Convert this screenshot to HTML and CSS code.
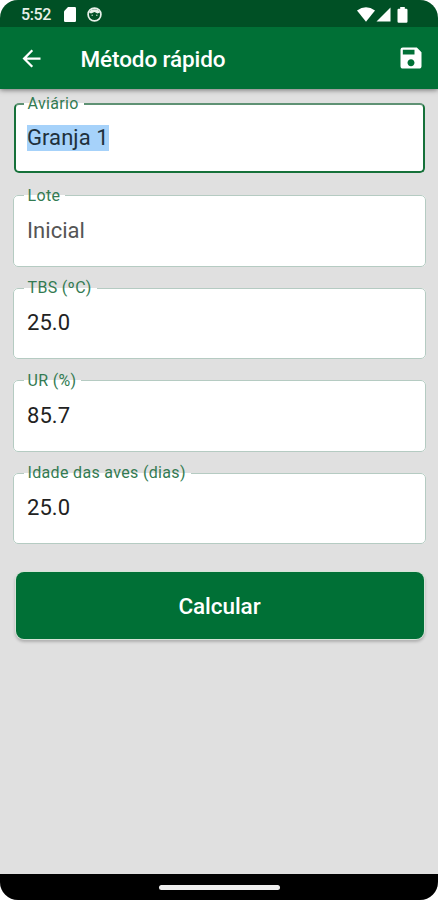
FILE: index.html
```html
<!DOCTYPE html>
<html lang="pt-BR">
<head>
<meta charset="utf-8">
<meta name="viewport" content="width=device-width">
<title>Método rápido</title>
<link rel="stylesheet" href="styles.css">
</head>
<body>
<div class="phone">
  <div class="status">
    <span class="time">5:52</span>
    <svg class="sd" width="12" height="15" viewBox="0 0 12 15"><path fill="#fff" d="M4 0h6.800Q12 0 12 1.200v12.600Q12 15 10.800 15H1.200Q0 15 0 13.800V4.200z"/></svg>
    <svg class="face" width="15" height="15" viewBox="0 0 15 15"><circle cx="7.500" cy="7.500" r="6.400" fill="none" stroke="#e8f0e9" stroke-width="1.700"/><path fill="#e8f0e9" d="M2 5.500C3.500 1 11.500 1 13 5.500L10.500 6.500 7.500 5 4 6.500z"/><circle cx="5.200" cy="8.200" r=".8" fill="#b8d0be"/><circle cx="9.800" cy="8.200" r=".8" fill="#b8d0be"/></svg>
    <span class="grow"></span>
    <svg class="wifi" width="18" height="15" viewBox="0 0 18 15"><path fill="#fff" d="M0 3.500Q9-3 18 3.500L9 14.800z"/></svg>
    <svg class="signal" width="15" height="15" viewBox="0 0 15 15"><path fill="#fff" d="M14.500.5v14H.5z"/></svg>
    <svg class="battery" width="11" height="16" viewBox="0 0 11 16"><path fill="#fff" d="M3.200 0h4.600v1.800h1.500q1.200 0 1.200 1.200v11.500q0 1.200-1.200 1.200H1.700Q.5 15.700.5 14.500V3q0-1.200 1.200-1.200h1.500z"/></svg>
  </div>
  <header class="appbar">
    <svg class="back" width="27" height="27" viewBox="0 0 24 24"><path fill="#fff" d="M20 11H7.830l5.590-5.590L12 4l-8 8 8 8 1.410-1.410L7.830 13H20v-2z"/></svg>
    <h1>Método rápido</h1>
    <svg class="save" width="28" height="28" viewBox="0 0 24 24"><path fill="#fff" d="M17 3H5a2 2 0 0 0-2 2v14c0 1.100.89 2 2 2h14c1.100 0 2-.9 2-2V7l-4-4zm-5 16c-1.660 0-3-1.340-3-3s1.340-3 3-3 3 1.340 3 3-1.340 3-3 3zm3-10H5V5h10v4z"/></svg>
  </header>
  <main>
    <fieldset class="field focused"><legend>Aviário</legend><span class="value"><mark>Granja 1</mark></span></fieldset>
    <fieldset class="field readonly"><legend>Lote</legend><span class="value">Inicial</span></fieldset>
    <fieldset class="field"><legend>TBS (ºC)</legend><span class="value">25.0</span></fieldset>
    <fieldset class="field"><legend>UR (%)</legend><span class="value">85.7</span></fieldset>
    <fieldset class="field"><legend>Idade das aves (dias)</legend><span class="value">25.0</span></fieldset>
    <button class="submit">Calcular</button>
  </main>
  <footer class="navbar"><span class="handle"></span></footer>
</div>
</body>
</html>
```
FILE: styles.css
```css
* { box-sizing: border-box; }
body { margin: 0; background: #fff; font-family: Roboto, sans-serif; }
.phone { width: 438px; height: 900px; display: flex; flex-direction: column; overflow: hidden; border-radius: 18px; background: #e0e0e0; }
.status { position: relative; z-index: 1; height: 27px; flex: none; display: flex; align-items: center; padding: 2px 30px 0 21px; background: #005025; color: #fff; }
.time { width: 43px; font-size: 16px; line-height: 20px; font-weight: 500; letter-spacing: -.35px; color: #e9f0e9; }
.face { margin-left: 11px; }
.grow { flex: 1; }
.signal { margin-left: 1px; }
.battery { margin-left: 6px; }
.appbar { height: 62px; flex: none; display: flex; align-items: center; padding: 0 13px 0 18px; background: #007036; color: #fff; box-shadow: 0 1px 5px rgba(0,0,0,.5); }
h1 { flex: 1; margin: 2px 0 0 35.500px; font-size: 22.500px; line-height: 28px; font-weight: 500; letter-spacing: -.1px; }
main { flex: 1; padding: 5px 12.500px 0; }
.field { height: 80px; min-width: 0; margin: 0 0 12.500px; padding: 0 0 0 10px; border: 1px solid #b5cbc2; border-radius: 5px; background: #fff; }
.field legend { height: 18px; padding: 0 5px 0 4px; font-size: 16px; line-height: 18px; letter-spacing: .33px; color: #337b52; }
.focused { height: 77.500px; margin: 1px 1px 14px; padding-left: 8px; border: 2px solid #16713a; border-top-color: #5f9274; }
.value { display: block; margin-top: 13px; padding-left: 3.500px; font-size: 22px; line-height: 26px; letter-spacing: .05px; color: #222; }
.focused .value { margin-top: 12px; }
.readonly .value { color: #555; }
mark { display: inline-block; height: 26px; background: #a6d2fa; color: #20303c; }
.submit { display: block; width: 408px; height: 67px; margin: 27.500px 0 0 3px; padding: 2px 0 0; border: 0; border-radius: 8px; background: #007036; color: #fff; font: 500 22.500px/28px Roboto, sans-serif; letter-spacing: -.05px; box-shadow: 0 0 0 1px #d6e4d8, 0 2px 3px 1px rgba(0,0,0,.22); }
.navbar { height: 26px; flex: none; display: flex; justify-content: center; align-items: center; background: #000; }
.handle { width: 121px; height: 5px; border-radius: 3px; background: #eee; }
```
